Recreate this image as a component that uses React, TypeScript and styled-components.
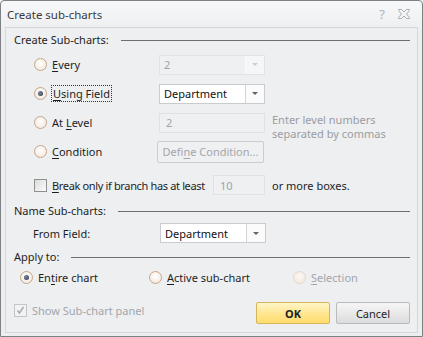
import styled, { createGlobalStyle } from 'styled-components';

const Global = createGlobalStyle`
  html, body { margin: 0; padding: 0; background: #ffffff; }
  body { font-family: "Noto Sans", "Liberation Sans", sans-serif; font-size: 11px; color: #1e1e1e; }
`;

const Window = styled.div`
  width: 421px;
  height: 335px;
  border: 1px solid #7d8084;
  border-radius: 4px 4px 0 0;
  background: linear-gradient(#f7f8f9, #eceef0 30px);
  display: flex;
  flex-direction: column;
`;

const TitleBar = styled.div`
  height: 26px;
  display: flex;
  align-items: center;
  padding: 0 8px 0 6px;
  font-size: 11.5px;
  color: #3a3a3a;
`;

const Title = styled.div`
  flex: 1;
`;

const TitleIcon = styled.span`
  width: 20px;
  display: flex;
  justify-content: center;
  color: #b0b3b7;
  font-size: 13px;
  margin-left: 2px;
`;

const Body = styled.div`
  flex: 1;
  margin: 0 4px 3px 4px;
  border: 1px solid #d4d7db;
  background: #edeff1;
  display: flex;
  flex-direction: column;
  padding: 1px 7px 0 8px;
`;

const SectionHead = styled.div`
  height: 20px;
  display: flex;
  align-items: center;
  gap: 12px;
  white-space: nowrap;
  &::after {
    content: '';
    flex: 1;
    height: 1px;
    background: #6e6e6e;
    margin-top: 2px;
  }
`;

const OptionGrid = styled.div`
  display: grid;
  grid-template-columns: 125px 113px auto;
  grid-auto-rows: 29px;
  align-items: center;
  padding-left: 20px;
  margin-top: 1px;
`;

const Choice = styled.label<{ $disabled?: boolean; $tight?: boolean }>`
  display: flex;
  align-items: center;
  gap: 5px;
  white-space: nowrap;
  letter-spacing: ${(p) => (p.$tight ? '-0.35px' : 'normal')};
  color: ${(p) => (p.$disabled ? '#a3a6aa' : '#1e1e1e')};
`;

const Radio = styled.span<{ $checked?: boolean; $disabled?: boolean }>`
  width: 11px;
  height: 11px;
  border-radius: 50%;
  border: 1px solid ${(p) => (p.$disabled ? '#e6d6c8' : '#c7a58a')};
  background: ${(p) =>
    p.$disabled
      ? 'radial-gradient(circle at 50% 40%, #fbf8f4, #efe6dc)'
      : 'radial-gradient(circle at 50% 40%, #ffffff, #f1e4d6)'};
  display: flex;
  align-items: center;
  justify-content: center;
  flex-shrink: 0;
  &::after {
    content: '';
    display: ${(p) => (p.$checked ? 'block' : 'none')};
    width: 5px;
    height: 5px;
    border-radius: 50%;
    background: radial-gradient(circle at 40% 40%, #7a8aa0, #26324a);
  }
`;

const Check = styled.span<{ $disabled?: boolean }>`
  width: 11px;
  height: 11px;
  border: 1px solid ${(p) => (p.$disabled ? '#c3c5c8' : '#8e8f8f')};
  background: ${(p) => (p.$disabled ? '#f2f3f4' : 'linear-gradient(135deg, #dcdcdc, #fbfbfb)')};
  display: flex;
  align-items: center;
  justify-content: center;
  flex-shrink: 0;
`;

const Focus = styled.span`
  outline: 1px dotted #333;
  outline-offset: 0;
  padding: 0 1px;
`;

const U = styled.span`
  text-decoration: underline;
  text-underline-offset: 2px;
`;

const Combo = styled.div<{ $disabled?: boolean }>`
  width: 104px;
  height: 18px;
  border: 1px solid ${(p) => (p.$disabled ? '#e0e2e5' : '#c9cbce')};
  background: ${(p) => (p.$disabled ? '#eef0f2' : '#ffffff')};
  color: ${(p) => (p.$disabled ? '#a0a3a7' : '#111')};
  display: flex;
  align-items: center;
  box-sizing: content-box;
`;

const ComboText = styled.span`
  flex: 1;
  padding-left: 4px;
`;

const ComboButton = styled.span<{ $disabled?: boolean }>`
  width: 18px;
  height: 18px;
  border-left: 1px solid ${(p) => (p.$disabled ? '#f7f8f9' : '#d2d4d7')};
  background: ${(p) => (p.$disabled ? '#f5f6f7' : '#fbfbfb')};
  display: flex;
  align-items: center;
  justify-content: center;
  &::after {
    content: '';
    border-left: 3px solid transparent;
    border-right: 3px solid transparent;
    border-top: 3px solid ${(p) => (p.$disabled ? '#c9ccd0' : '#5f6368')};
  }
`;

const TextBox = styled.div<{ $width?: number }>`
  width: ${(p) => p.$width ?? 98}px;
  height: 18px;
  border: 1px solid #dfe2e5;
  background: #eef0f2;
  color: #a0a3a7;
  display: flex;
  align-items: center;
  padding-left: 6px;
  box-sizing: content-box;
`;

const Hint = styled.div`
  color: #9a9da1;
  line-height: 14px;
  white-space: nowrap;
  margin-top: 9px;
`;

const FlatButton = styled.div`
  width: 105px;
  height: 20px;
  border: 1px solid #c9ccd0;
  border-radius: 2px;
  background: #eef0f2;
  color: #a3a6aa;
  display: flex;
  align-items: center;
  justify-content: center;
  margin-left: -2px;
`;

const BreakRow = styled.div`
  display: grid;
  grid-template-columns: 179px 59px auto;
  align-items: center;
  height: 30px;
  margin-top: 4px;
  padding-left: 20px;
`;

const FieldRow = styled.div`
  display: grid;
  grid-template-columns: 127px auto;
  align-items: center;
  height: 26px;
  padding-left: 19px;
`;

const ApplyRow = styled.div`
  display: flex;
  align-items: center;
  height: 22px;
  padding-left: 6px;
`;

const ApplyCell = styled.div<{ $w: number }>`
  width: ${(p) => p.$w}px;
`;

const Footer = styled.div`
  display: flex;
  align-items: flex-start;
  margin-top: 14px;
`;

const FooterLeft = styled.div`
  flex: 1;
  padding-top: 1px;
`;

const DialogButton = styled.div<{ $primary?: boolean }>`
  width: 72px;
  height: 20px;
  border: 1px solid ${(p) => (p.$primary ? '#d7b55c' : '#b9bbbe')};
  border-radius: 2px;
  background: ${(p) =>
    p.$primary
      ? 'linear-gradient(#fff6c8, #ffe58e 55%, #ffdc6f)'
      : 'linear-gradient(#f6f6f6, #e9e9e9 50%, #dcdcdc)'};
  display: flex;
  align-items: center;
  justify-content: center;
  font-weight: ${(p) => (p.$primary ? 700 : 400)};
  color: #1e1e1e;
  margin-left: 6px;
`;

function CloseIcon() {
  return (
    <svg width="14" height="12" viewBox="0 0 14 12">
      <path
        d="M1.5 1.5h3l2.5 2.5 2.5-2.5h3v1l-3 3.5 3 3.5v1h-3L7 8l-2.5 2.5h-3v-1l3-3.5-3-3.5z"
        fill="none"
        stroke="#a9acb0"
        strokeWidth="1"
      />
    </svg>
  );
}

function CheckMark() {
  return (
    <svg width="9" height="9" viewBox="0 0 9 9">
      <path d="M1.5 4.5l2 2.5 4-6" fill="none" stroke="#a7aaae" strokeWidth="1.5" />
    </svg>
  );
}

export default function App() {
  return (
    <>
      <Global />
      <Window>
        <TitleBar>
          <Title>Create sub-charts</Title>
          <TitleIcon>?</TitleIcon>
          <TitleIcon>
            <CloseIcon />
          </TitleIcon>
        </TitleBar>
        <Body>
          <SectionHead>Create Sub-charts:</SectionHead>
          <OptionGrid>
            <Choice>
              <Radio />
              <span>
                <U>E</U>very
              </span>
            </Choice>
            <Combo $disabled>
              <ComboText>2</ComboText>
              <ComboButton $disabled />
            </Combo>
            <span />

            <Choice>
              <Radio $checked />
              <Focus>
                <U>U</U>sing Field
              </Focus>
            </Choice>
            <Combo>
              <ComboText>Department</ComboText>
              <ComboButton />
            </Combo>
            <span />

            <Choice>
              <Radio />
              <span>
                At <U>L</U>evel
              </span>
            </Choice>
            <TextBox>2</TextBox>
            <Hint>
              Enter level numbers
              <br />
              separated by commas
            </Hint>

            <Choice>
              <Radio />
              <span>
                <U>C</U>ondition
              </span>
            </Choice>
            <FlatButton>
              <span>
                Defi<U>n</U>e Condition...
              </span>
            </FlatButton>
            <span />
          </OptionGrid>
          <BreakRow>
            <Choice $tight>
              <Check />
              <span>
                <U>B</U>reak only if branch has at least
              </span>
            </Choice>
            <TextBox $width={44}>10</TextBox>
            <span>or more boxes.</span>
          </BreakRow>
          <SectionHead>Name Sub-charts:</SectionHead>
          <FieldRow>
            <span>From Field:</span>
            <Combo>
              <ComboText>Department</ComboText>
              <ComboButton />
            </Combo>
          </FieldRow>
          <SectionHead>Apply to:</SectionHead>
          <ApplyRow>
            <ApplyCell $w={129}>
              <Choice>
                <Radio $checked />
                <span>
                  En<U>t</U>ire chart
                </span>
              </Choice>
            </ApplyCell>
            <ApplyCell $w={144}>
              <Choice>
                <Radio />
                <span>
                  <U>A</U>ctive sub-chart
                </span>
              </Choice>
            </ApplyCell>
            <ApplyCell $w={100}>
              <Choice $disabled>
                <Radio $disabled />
                <span>
                  <U>S</U>election
                </span>
              </Choice>
            </ApplyCell>
          </ApplyRow>
          <Footer>
            <FooterLeft>
              <Choice $disabled>
                <Check $disabled>
                  <CheckMark />
                </Check>
                <span>Show Sub-chart panel</span>
              </Choice>
            </FooterLeft>
            <DialogButton $primary>OK</DialogButton>
            <DialogButton>Cancel</DialogButton>
          </Footer>
        </Body>
      </Window>
    </>
  );
}
